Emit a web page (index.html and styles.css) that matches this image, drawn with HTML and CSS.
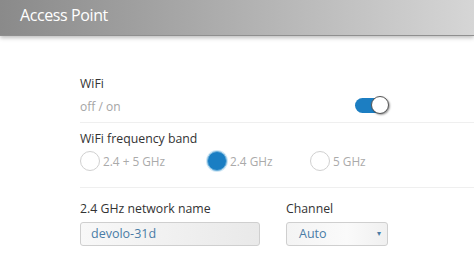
FILE: index.html
```html
<!DOCTYPE html>
<html lang="en">
<head>
  <meta charset="UTF-8" />
  <title>Access Point</title>
  <link rel="stylesheet" href="styles.css">
</head>
<body>
  <header class="header">Access Point</header>
  <main class="content">
    <section class="row">
      <div class="wifi-row">
        <div>
          <div class="label">WiFi</div>
          <div class="hint">off / on</div>
        </div>
        <span class="toggle"><span class="knob"></span></span>
      </div>
    </section>
    <section class="row band">
      <div class="label">WiFi frequency band</div>
      <div class="radios">
        <label class="radio"><span class="dot"></span>2.4 + 5 GHz</label>
        <label class="radio"><span class="dot checked"></span>2.4 GHz</label>
        <label class="radio"><span class="dot"></span>5 GHz</label>
      </div>
    </section>
    <section class="fields">
      <div class="field name">
        <div class="label">2.4 GHz network name</div>
        <div class="input">devolo-31d</div>
      </div>
      <div class="field channel">
        <div class="label">Channel</div>
        <div class="input select">Auto<span class="arrow">&#9662;</span></div>
      </div>
    </section>
  </main>
</body>
</html>
```

FILE: styles.css
```css
body { margin: 0; font-family: "Open Sans", sans-serif; background-color: #fff; color: #333; overflow: hidden; }
.header {
  height: 35px; line-height: 31px; padding-left: 20px;
  font-size: 16px; letter-spacing: -0.4px; color: #fff;
  background: linear-gradient(to right, #8a8a8a, #a8a8a8 40%, #d6d6d6);
  border-bottom: 1px solid #8f8f8f;
  box-shadow: 0 2px 4px rgba(0, 0, 0, 0.25);
}
.content { padding: 39px 0 0 80px; }
.label { font-size: 12.3px; line-height: 18px; color: #333; }
.hint { font-size: 12px; line-height: 18px; color: #a5a5a5; margin-top: 5px; }
.row { border-bottom: 1px solid #efefef; }
.wifi-row {
  display: flex; justify-content: space-between; align-items: flex-end;
  width: 308px; padding-bottom: 6px;
}
.toggle {
  position: relative; display: block; width: 33px; height: 15px;
  border-radius: 8px; background-color: #1c7ec2; margin-bottom: 3px;
}
.toggle .knob {
  position: absolute; right: -1px; top: -2px;
  width: 16px; height: 16px; border-radius: 50%;
  background-color: #fff; border: 1px solid #555;
  box-shadow: 1px 1px 2px rgba(0, 0, 0, 0.4);
}
.band { padding-top: 7px; padding-bottom: 16px; }
.radios { display: grid; grid-template-columns: 127px 103px auto; margin-top: 3px; }
.radio { display: flex; align-items: center; gap: 3px; font-size: 11.8px; color: #aaa; }
.dot {
  width: 18px; height: 18px; border-radius: 50%;
  border: 1px solid #d0d0d0; background-color: #fff;
}
.dot.checked {
  background-color: #1a7ec3; border: 1px solid #6fb2dc;
  box-shadow: 0 0 0 1px #cfe6f4;
}
.fields { display: flex; gap: 26px; padding-top: 12px; }
.field .label { margin-bottom: 4px; }
.input {
  box-sizing: border-box; height: 24px; line-height: 22px;
  padding-left: 10px; font-size: 12.5px; color: #4a7ca6;
  border: 1px solid #cfcfcf; border-radius: 3px;
  background: linear-gradient(to right, #f8f8f8, #e9e9e9);
}
.name .input { width: 180px; }
.select { position: relative; width: 102px; padding-left: 12px; background: linear-gradient(to right, #f4f4f4, #fafafa 60%, #f0f0f0); }
.select .arrow { position: absolute; right: 6px; top: -1px; font-size: 8px; color: #4a7ca6; }
```
